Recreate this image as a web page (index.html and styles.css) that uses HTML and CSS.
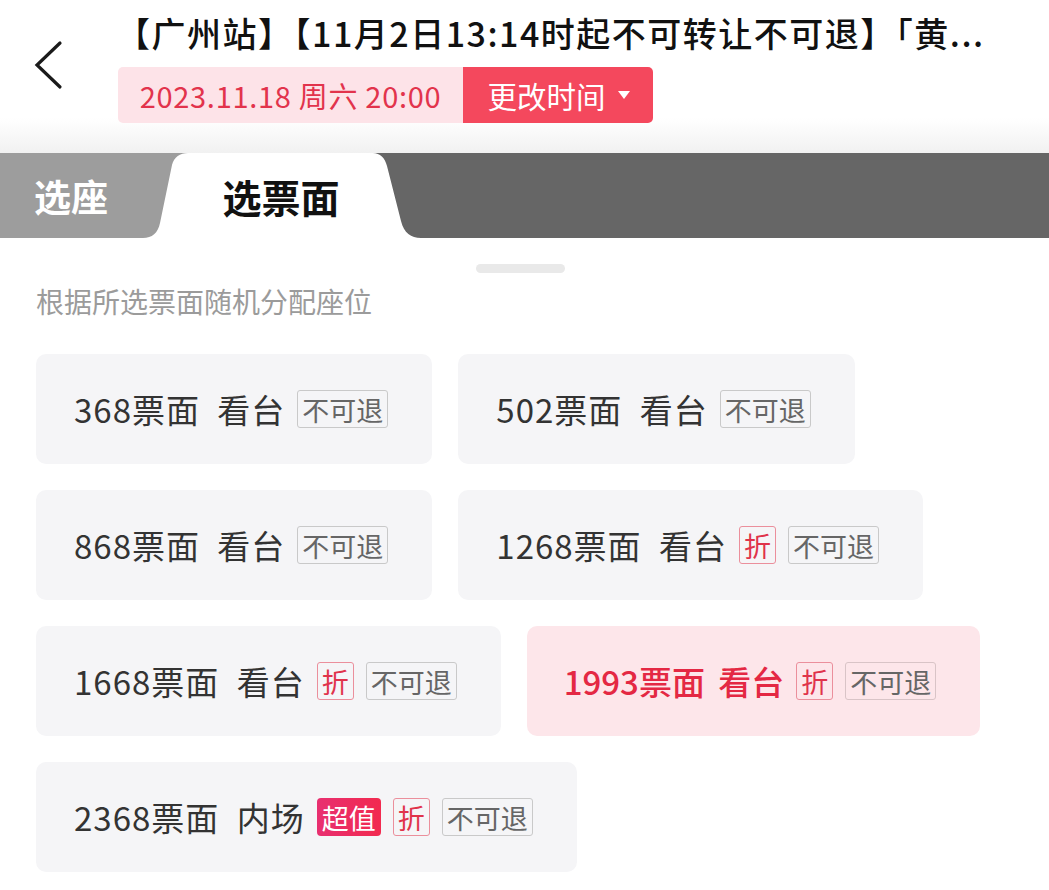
FILE: index.html
```html
<!DOCTYPE html>
<html lang="zh-CN">
<head>
<meta charset="utf-8">
<title>选票面</title>
<link rel="stylesheet" href="styles.css">
</head>
<body>
<div class="page">
  <header class="header">
    <div class="back">
      <svg width="30" height="50" viewBox="0 0 30 50"><polyline points="26,3 3,25 26,47" fill="none" stroke="#1a1a1a" stroke-width="3.2" stroke-linecap="round" stroke-linejoin="miter"/></svg>
    </div>
    <div class="head-main">
      <div class="title">【广州站】【11月2日13:14时起不可转让不可退】「黄...</div>
      <div class="chip">
        <span class="chip-date">2023.11.18 周六 20:00</span>
        <span class="chip-btn">更改时间<svg class="caret" width="14" height="10" viewBox="0 0 14 10"><polygon points="1,1 13,1 7,9" fill="#fff"/></svg></span>
      </div>
    </div>
  </header>

  <nav class="tabs">
    <div class="tab tab-seat">选座</div>
    <div class="tab tab-face">选票面</div>
    <div class="tab-rest"></div>
  </nav>

  <main class="content">
    <div class="handle"></div>
    <p class="hint">根据所选票面随机分配座位</p>
    <div class="cards">
      <div class="card"><span class="name">368票面 看台</span><span class="tag tag-gray">不可退</span></div>
      <div class="card"><span class="name">502票面 看台</span><span class="tag tag-gray">不可退</span></div>
      <div class="card"><span class="name">868票面 看台</span><span class="tag tag-gray">不可退</span></div>
      <div class="card"><span class="name">1268票面 看台</span><span class="tag tag-red">折</span><span class="tag tag-gray">不可退</span></div>
      <div class="card"><span class="name">1668票面 看台</span><span class="tag tag-red">折</span><span class="tag tag-gray">不可退</span></div>
      <div class="card card-active"><span class="name">1993票面 看台</span><span class="tag tag-red">折</span><span class="tag tag-gray">不可退</span></div>
      <div class="card"><span class="name">2368票面 内场</span><span class="tag tag-hot">超值</span><span class="tag tag-red">折</span><span class="tag tag-gray">不可退</span></div>
    </div>
  </main>
</div>
</body>
</html>
```

FILE: styles.css
```css
* { box-sizing: border-box; }
html, body { margin: 0; padding: 0; background: #fff; }
body {
  font-family: "Noto Sans CJK SC", "Noto Sans", "Liberation Sans", sans-serif;
  color: #333;
}
.page { width: 1049px; height: 890px; overflow: hidden; }

.header {
  height: 153px;
  display: flex;
  background: linear-gradient(#fff 0, #fff 118px, #f1f1f1 153px);
}
.back {
  width: 118px;
  padding: 40px 0 0 34px;
}
.back svg { display: block; }
.head-main { padding-top: 11px; }
.title {
  font-size: 34px;
  line-height: 44px;
  font-weight: 500;
  color: #111;
  white-space: nowrap;
  letter-spacing: 1.5px;
  margin-left: -2px;
}
.chip {
  margin-top: 12px;
  display: inline-flex;
  height: 56px;
  border-radius: 5px;
  overflow: hidden;
}
.chip-date {
  width: 345px;
  background: #fde3e8;
  color: #e2334c;
  font-size: 29px;
  letter-spacing: 0.7px;
  display: flex;
  align-items: center;
  justify-content: center;
}
.chip-btn {
  width: 190px;
  background: #f4485d;
  color: #fff;
  font-size: 29.5px;
  display: flex;
  align-items: center;
  justify-content: center;
  gap: 11px;
  padding-left: 2px;
}
.caret { display: block; }

.tabs {
  display: flex;
  height: 85px;
  background: linear-gradient(90deg, #9d9d9d 0, #9d9d9d 280px, #666 280px);
}
.tab {
  display: flex;
  align-items: center;
  font-weight: 700;
}
.tab-seat {
  width: 143px;
  padding-left: 34px;
  color: #fff;
  font-size: 37px;
}
.tab-face {
  width: 278px;
  justify-content: center;
  padding-right: 2px;
  color: #111;
  font-size: 39px;
  background: #fff;
  clip-path: path('M0,85 C9,85 15,80 17,70 L29,12 C31,4 37,0 45,0 L230,0 C237,0 242,5 244,13 L258,68 C261,80 268,85 278,85 Z');
}
.tab-rest { flex: 1; }

.content { padding: 0 36px; }
.handle {
  width: 89px;
  height: 9px;
  margin: 26px 0 0 440px;
  border-radius: 5px;
  background: #e9e9e9;
}
.hint {
  margin: 8px 0 0;
  font-size: 28px;
  line-height: 40px;
  color: #9b9b9b;
}
.cards {
  margin-top: 33px;
  display: flex;
  flex-wrap: wrap;
  gap: 26px;
}
.card {
  height: 110px;
  padding: 0 44px 0 38px;
  display: flex;
  align-items: center;
  gap: 12px;
  background: #f5f5f7;
  border-radius: 10px;
}
.name {
  font-size: 33px;
  letter-spacing: 1px;
  word-spacing: 9px;
  color: #333;
  white-space: pre;
}
.card-active { background: #fde6ea; padding-left: 37px; }
.card-active .name { color: #e42843; font-weight: 500; letter-spacing: 0; word-spacing: 6px; }

.tag {
  height: 38px;
  padding: 0 4px;
  display: flex;
  align-items: center;
  font-size: 27px;
  border-radius: 3px;
  line-height: 1;
}
.tag-gray {
  border: 1px solid #c9c9c9;
  color: #666;
}
.card-active .tag-gray { border-color: #d9c4c7; }
.tag-red {
  border: 1px solid #eb8f9c;
  color: #e0334b;
}
.tag-hot {
  padding: 0 5px;
  background: linear-gradient(90deg, #e82f70, #f22a4f);
  color: #fff;
  border-radius: 4px;
}
```
